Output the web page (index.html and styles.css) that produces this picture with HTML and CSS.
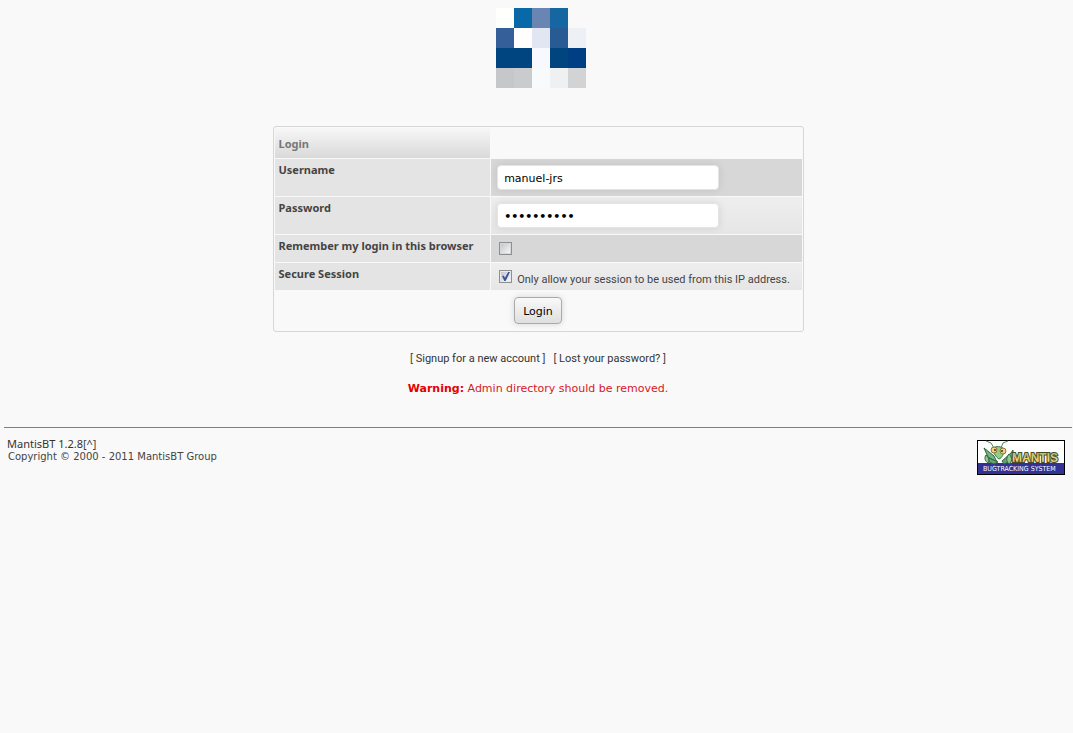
FILE: index.html
```
<!DOCTYPE html>
<html lang="en">
<head>
    <meta charset="UTF-8">
    <meta name="viewport" content="width=device-width, initial-scale=1.0">
    <title>MantisBT</title>
    <link rel="stylesheet" href="styles.css">
</head>
<body>
    <header class="logo">
        <svg width="90" height="80" viewBox="0 0 90 80" shape-rendering="crispEdges" role="img" aria-label="Logo">
            <rect x="0" y="0" width="18" height="20" fill="#fffffc"/>
            <rect x="18" y="0" width="18" height="20" fill="#0969a8"/>
            <rect x="36" y="0" width="18" height="20" fill="#6985b1"/>
            <rect x="54" y="0" width="18" height="20" fill="#1667a1"/>
            <rect x="0" y="20" width="18" height="20" fill="#355f98"/>
            <rect x="18" y="20" width="18" height="20" fill="#fffefc"/>
            <rect x="36" y="20" width="18" height="20" fill="#e2e6f2"/>
            <rect x="54" y="20" width="18" height="20" fill="#285b94"/>
            <rect x="72" y="20" width="18" height="20" fill="#edf0f4"/>
            <rect x="0" y="40" width="36" height="20" fill="#00457f"/>
            <rect x="36" y="40" width="18" height="20" fill="#f8f8ff"/>
            <rect x="54" y="40" width="18" height="20" fill="#00457d"/>
            <rect x="72" y="40" width="18" height="20" fill="#003e83"/>
            <rect x="0" y="60" width="18" height="20" fill="#c6c7c9"/>
            <rect x="18" y="60" width="18" height="20" fill="#cacbcd"/>
            <rect x="36" y="60" width="18" height="20" fill="#f8fafc"/>
            <rect x="54" y="60" width="18" height="20" fill="#eef0f2"/>
            <rect x="72" y="60" width="18" height="20" fill="#d2d3d5"/>
        </svg>
    </header>

    <form class="login-form" onsubmit="return false">
        <table class="login-table">
            <tr>
                <td class="form-title">Login</td>
                <td></td>
            </tr>
            <tr class="row-1 row-input">
                <th class="category"><label for="username">Username</label></th>
                <td><input class="text-field" type="text" id="username" value="manuel-jrs"></td>
            </tr>
            <tr class="row-2 row-input">
                <th class="category"><label for="password">Password</label></th>
                <td><input class="text-field password" type="password" id="password" value="0123456789"></td>
            </tr>
            <tr class="row-1 row-check">
                <th class="category"><label for="remember">Remember my login in this browser</label></th>
                <td><input class="check" type="checkbox" id="remember"></td>
            </tr>
            <tr class="row-2 row-check">
                <th class="category"><label for="secure">Secure Session</label></th>
                <td>
                    <div class="check-line">
                        <input class="check" type="checkbox" id="secure" checked>
                        <label for="secure">Only allow your session to be used from this IP address.</label>
                    </div>
                </td>
            </tr>
            <tr>
                <td class="form-actions" colspan="2"><button class="button" type="submit">Login</button></td>
            </tr>
        </table>
    </form>

    <nav class="login-links">
        <span>[ <a href="#">Signup for a new account</a> ]</span>
        <span>[ <a href="#">Lost your password?</a> ]</span>
    </nav>

    <p class="warning"><strong>Warning:</strong> Admin directory should be removed.</p>

    <footer class="footer">
        <div>
            <p class="version"><a href="#">MantisBT 1.2.8</a>[<a href="#">^</a>]</p>
            <address class="copyright">Copyright © 2000 - 2011 MantisBT Group</address>
        </div>
        <a class="mantis-logo" href="#" aria-label="Mantis Bugtracking System">
            <svg width="88" height="35" viewBox="0 0 88 35">
                <defs>
                    <linearGradient id="name-fill" x1="0" y1="0" x2="0" y2="1">
                        <stop offset="0.2" stop-color="#a5c878"/>
                        <stop offset="0.6" stop-color="#f0d884"/>
                        <stop offset="0.9" stop-color="#dba24f"/>
                    </linearGradient>
                </defs>
                <rect width="88" height="35" fill="#000"/>
                <rect x="1" y="1" width="86" height="22" fill="#fff"/>
                <rect x="1" y="23" width="86" height="11" fill="#323296"/>
                <!-- antennae -->
                <path d="M17 8 L14 3 L9 1 M24 8 L26 3 L31 1" fill="none" stroke="#4d8757"/>
                <!-- claws -->
                <path d="M7 8 L17 16 L20 22 L11 17 Z" fill="#78b57c" stroke="#2f6540"/>
                <path d="M9 15 C7 18 8 21 11 23 C13 21 12 18 9 15 Z" fill="#8fca8c" stroke="#2f6540"/>
                <path d="M12 18 L21 22 L17 24 L12 22 Z" fill="#66a66c" stroke="#2f6540"/>
                <path d="M25 21 L34 13 L36 10 L36 17 L31 22 L27 24 Z" fill="#66a66c" stroke="#2f6540"/>
                <path d="M32 14 C29 18 29 21 32 24 C35 22 36 18 32 14 Z" fill="#8fca8c" stroke="#2f6540"/>
                <!-- head -->
                <path d="M16 8 C19 6 24 6 27 9 C27 14 25 18 22 19 C19 17 16 13 16 8 Z" fill="#93cc85" stroke="#3d7848"/>
                <circle cx="17" cy="10" r="3" fill="#f0cf7d" stroke="#8d753a"/>
                <circle cx="26" cy="11" r="3" fill="#f0cf7d" stroke="#8d753a"/>
                <circle cx="18" cy="10" r="1" fill="#333"/>
                <circle cx="25" cy="11" r="1" fill="#333"/>
                <text class="mantis-name" x="35" y="22">MANTIS</text>
                <text class="mantis-tag" x="6" y="31">BUGTRACKING SYSTEM</text>
            </svg>
        </a>
    </footer>
</body>
</html>
```
FILE: styles.css
```
* {
    box-sizing: border-box;
    margin: 0;
    padding: 0;
}

body {
    padding: 8px 1px 8px 4px;
    background: #f9f9f9;
    color: #444;
    font-family: Roboto, Tahoma, sans-serif;
    font-size: 11px;
    line-height: 14px;
}

a {
    color: #333;
    text-decoration: none;
}

.logo {
    display: flex;
    justify-content: center;
    padding-left: 6px;
    margin-bottom: 38px;
}

.login-table {
    width: 49%;
    min-width: 531px;
    margin: 0 auto;
    border: 1px solid #d6d6d6;
    border-radius: 3px;
    border-spacing: 1px;
    table-layout: fixed;
}

.login-table td,
.login-table th {
    padding: 0 4px;
}

.login-table .form-title {
    width: 41%;
    height: 30px;
    padding-top: 2px;
    background: linear-gradient(#f7f7f7, #d9d9d9);
    color: #777;
    font-family: "Noto Sans", Tahoma, sans-serif;
    font-weight: bold;
}

.login-table .category {
    padding-top: 4px;
    background: #e4e4e4;
    font-family: "Noto Sans", Tahoma, sans-serif;
    text-align: left;
    vertical-align: top;
    white-space: nowrap;
}

.row-1 td {
    background: #d7d7d7;
}

.row-2 td {
    background: linear-gradient(#eee, #e6e6e6);
}

.row-input {
    height: 37px;
}

.row-check {
    height: 27px;
}

.login-table .row-input td {
    padding: 0 6px;
}

.login-table .row-check td {
    padding: 0 8px;
}

.text-field {
    display: block;
    width: 222px;
    height: 25px;
    padding: 1px 6px 0;
    border: 1px solid #e4e4e4;
    border-radius: 4px;
    background: #fff;
    box-shadow: 0 0 8px rgba(0, 0, 0, 0.1);
    color: #000;
    font-family: "DejaVu Sans", Verdana, sans-serif;
    font-size: 11px;
}

.password {
    font-weight: bold;
}

.check-line {
    display: flex;
    align-items: center;
    gap: 5px;
}

.check-line label {
    padding-top: 6px;
    white-space: nowrap;
}

.check {
    appearance: none;
    display: block;
    flex: none;
    width: 13px;
    height: 13px;
    padding: 1px;
    border: 1px solid #8e8f8f;
    background: linear-gradient(135deg, #c3c7cd, #f6f6f6) content-box #f4f4f4;
}

.check:checked::before {
    content: "";
    display: block;
    width: 9px;
    height: 9px;
    background: #39549b;
    clip-path: polygon(10% 45%, 28% 40%, 42% 65%, 78% 0, 98% 0, 50% 100%, 35% 100%);
}

.login-table .form-actions {
    height: 39px;
    text-align: center;
}

.button {
    height: 27px;
    padding: 1px 8px 0;
    border: 1px solid #aaa;
    border-radius: 4px;
    background: linear-gradient(#f9f9f9, #dfdfdf);
    box-shadow: 0 0 6px rgba(0, 0, 0, 0.15);
    color: #000;
    font-family: "DejaVu Sans", Verdana, sans-serif;
    font-size: 11px;
}

.login-links {
    display: flex;
    justify-content: center;
    gap: 8px;
    margin-top: 20px;
}

.warning {
    margin-top: 16px;
    color: #d8171d;
    font-family: "DejaVu Sans", Verdana, sans-serif;
    text-align: center;
}

.warning strong {
    color: #e60000;
}

.footer {
    display: flex;
    justify-content: space-between;
    margin-top: 31px;
    padding: 9px 7px 0 3px;
    border-top: 1px solid #808080;
}

.version {
    font-family: "Noto Sans", Tahoma, sans-serif;
}

.copyright {
    padding-left: 1px;
    font-family: "DejaVu Sans", Verdana, sans-serif;
    font-size: 10px;
    font-style: normal;
    line-height: 12px;
}

.mantis-logo {
    padding-top: 3px;
}

.mantis-logo svg {
    display: block;
}

.mantis-name {
    fill: url(#name-fill);
    stroke: #4d4a28;
    stroke-width: 2px;
    paint-order: stroke;
    font-family: "Liberation Sans", Arial, sans-serif;
    font-size: 12px;
    font-weight: bold;
}

.mantis-tag {
    fill: #fff;
    font-family: "DejaVu Sans Condensed", Verdana, sans-serif;
    font-size: 7px;
}
```
